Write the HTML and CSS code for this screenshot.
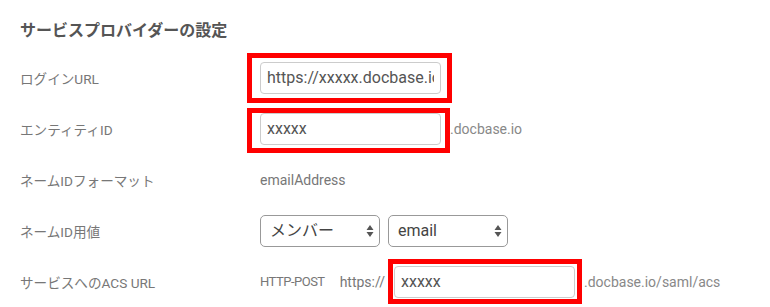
FILE: index.html
```html
<!DOCTYPE html>
<html lang="ja">
  <head>
    <meta charset="UTF-8" />
    <meta name="viewport" content="width=device-width, initial-scale=1.0" />
    <title>サービスプロバイダーの設定</title>
    <link rel="stylesheet" href="styles.css">
  </head>
  <body>
    <div class="settings">
      <h2 class="settings-title">サービスプロバイダーの設定</h2>

      <div class="form-row">
        <div class="form-label">ログインURL</div>
        <div class="form-value">
          <span class="mark mark-login">
            <input class="text-input" type="text" value="https://xxxxx.docbase.io" readonly>
          </span>
        </div>
      </div>

      <div class="form-row">
        <div class="form-label">エンティティID</div>
        <div class="form-value">
          <span class="mark mark-entity">
            <input class="text-input" type="text" value="xxxxx" readonly>
          </span>
          <span class="suffix">.docbase.io</span>
        </div>
      </div>

      <div class="form-row">
        <div class="form-label">ネームIDフォーマット</div>
        <div class="form-value">
          <span class="plain">emailAddress</span>
        </div>
      </div>

      <div class="form-row">
        <div class="form-label">ネームID用値</div>
        <div class="form-value selects">
          <span class="select-wrap">
            <select class="select">
              <option>メンバー</option>
            </select>
            <svg class="select-arrow" width="8" height="14" viewBox="0 0 8 14">
              <path d="M4 1 L7.5 6 H0.5 Z M4 13 L7.5 8 H0.5 Z" fill="#555" />
            </svg>
          </span>
          <span class="select-wrap">
            <select class="select">
              <option>email</option>
            </select>
            <svg class="select-arrow" width="8" height="14" viewBox="0 0 8 14">
              <path d="M4 1 L7.5 6 H0.5 Z M4 13 L7.5 8 H0.5 Z" fill="#555" />
            </svg>
          </span>
        </div>
      </div>

      <div class="form-row">
        <div class="form-label">サービスへのACS URL</div>
        <div class="form-value">
          <span class="binding">HTTP-POST</span>
          <span class="prefix">https://</span>
          <span class="mark mark-acs">
            <input class="text-input" type="text" value="xxxxx" readonly>
          </span>
          <span class="suffix suffix-acs">.docbase.io/saml/acs</span>
        </div>
      </div>
    </div>
  </body>
</html>
```

FILE: styles.css
```css
* {
  margin: 0;
  padding: 0;
  box-sizing: border-box;
}

body {
  background-color: #fff;
  font-family: Roboto, "Noto Sans CJK JP", sans-serif;
  color: #777;
}

.settings {
  padding-left: 20px;
}

.settings-title {
  font-size: 16px;
  font-weight: bold;
  line-height: 20px;
  color: #555;
  margin: 21px 0 11px;
}

.form-row {
  display: flex;
  align-items: center;
  height: 51px;
}

.form-label {
  width: 240px;
  font-size: 13.6px;
  color: #777;
}

.form-value {
  display: flex;
  align-items: center;
  font-size: 14px;
  color: #888;
}

.plain {
  color: #777;
}

.text-input {
  display: block;
  width: 181px;
  height: 32px;
  padding: 0 6px;
  border: 1px solid #ccc;
  border-radius: 4px;
  font-family: Roboto, "Noto Sans CJK JP", sans-serif;
  font-size: 16px;
  color: #555;
  background: #fff;
  outline: none;
}

/* red annotation boxes drawn over the inputs */
.mark {
  position: relative;
  display: block;
}

.mark::after {
  content: "";
  position: absolute;
  border: 5px solid #f00;
  pointer-events: none;
}

.mark-login::after {
  top: -9px;
  bottom: -9px;
  left: -13px;
  right: -11px;
}

.mark-entity::after {
  top: -5px;
  bottom: -8px;
  left: -13px;
  right: -9px;
}

.mark-acs::after {
  top: -7px;
  bottom: -6px;
  left: -6px;
  right: -7px;
}

.suffix {
  margin-left: 9px;
}

.suffix-acs {
  margin-left: 9px;
}

.binding {
  font-size: 13px;
  letter-spacing: -0.5px;
  color: #777;
}

.prefix {
  font-size: 14px;
  color: #777;
  margin-left: 15px;
  margin-right: 9px;
}

.selects {
  gap: 8px;
}

.select-wrap {
  position: relative;
  display: block;
}

.select {
  display: block;
  appearance: none;
  width: 120px;
  height: 32px;
  padding: 0 9px;
  border: 1px solid #999;
  border-radius: 5px;
  background: #fff;
  font-family: Roboto, "Noto Sans CJK JP", sans-serif;
  font-size: 16px;
  color: #444;
}

.select-arrow {
  position: absolute;
  right: 6px;
  top: 9px;
}
```
